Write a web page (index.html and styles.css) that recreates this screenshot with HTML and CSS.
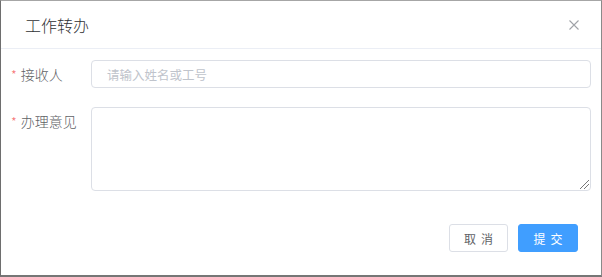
FILE: index.html
```html
<!DOCTYPE html>
<html lang="zh">
<head>
<meta charset="utf-8">
<link rel="stylesheet" href="styles.css">
</head>
<body>
<div class="dialog">
  <div class="dialog-header">
    <span class="dialog-title">工作转办</span>
    <span class="close" aria-label="关闭">
      <svg width="12" height="12" viewBox="0 0 12 12"><path d="M1.5 1.5 L10.5 10.5 M10.5 1.5 L1.5 10.5" stroke="#a0a3a8" stroke-width="1.1" fill="none"/></svg>
    </span>
  </div>
  <div class="dialog-body">
    <div class="form-row">
      <label class="form-label"><span class="req">*</span>接收人</label>
      <div class="form-control"><div class="input"><span class="placeholder">请输入姓名或工号</span></div></div>
    </div>
    <div class="form-row row-textarea">
      <label class="form-label"><span class="req">*</span>办理意见</label>
      <div class="form-control"><div class="textarea"><span class="grip"></span></div></div>
    </div>
  </div>
  <div class="dialog-footer">
    <button class="btn btn-default">取消</button>
    <button class="btn btn-primary">提交</button>
  </div>
</div>
</body>
</html>
```
FILE: styles.css
```css
* { box-sizing: border-box; }
html, body { margin: 0; padding: 0; background: #fff; }
body { font-family: "Noto Sans CJK SC", "Noto Sans", sans-serif; }

.dialog {
  width: 602px;
  height: 277px;
  border-top: 1px solid #a6a6a6;
  border-left: 1px solid #6e6e6e;
  border-right: 1px solid #8a8a8a;
  border-bottom: 2px solid #767676;
  background: #fff;
  display: flex;
  flex-direction: column;
}

.dialog-header {
  height: 48px;
  border-bottom: 1px solid #ebeef5;
  display: flex;
  align-items: center;
  justify-content: space-between;
  padding: 0 21px 0 24px;
  flex-shrink: 0;
}
.dialog-title {
  font-size: 16px;
  font-weight: 300;
  color: #303133;
  line-height: 24px;
}
.close {
  display: flex;
  width: 12px;
  height: 12px;
}

.dialog-body {
  padding: 11px 10px 0 10px;
  display: flex;
  flex-direction: column;
  gap: 18px;
}
.form-row {
  display: flex;
}
.form-label {
  width: 80px;
  flex-shrink: 0;
  font-size: 14px;
  font-weight: 300;
  color: #606266;
  line-height: 28px;
}
.req {
  color: #f56c6c;
  margin-right: 4px;
  font-size: 13px;
}
.form-control { flex: 1; }
.input {
  height: 28px;
  border: 1px solid #dcdfe6;
  border-radius: 4px;
  padding: 0 15px;
  display: flex;
  align-items: center;
}
.placeholder {
  font-size: 12.5px;
  color: #c0c4cc;
}
.textarea {
  height: 84px;
  border: 1px solid #dcdfe6;
  border-radius: 4px;
  position: relative;
}
.grip {
  position: absolute;
  right: 1px;
  bottom: 1px;
  width: 9px;
  height: 9px;
  background: linear-gradient(135deg, transparent 0 45%, #777 45% 52%, transparent 52% 68%, #777 68% 75%, transparent 75%);
}

.dialog-footer {
  display: flex;
  justify-content: flex-end;
  gap: 10px;
  padding: 33px 23px 0 0;
}
.btn {
  height: 28px;
  width: 60px;
  border-radius: 3px;
  font-family: "Noto Sans CJK SC", sans-serif;
  font-size: 12px;
  letter-spacing: 5px;
  padding: 0 0 0 5px;
  border: 1px solid #dcdfe6;
  cursor: pointer;
}
.btn-default {
  background: #fff;
  color: #606266;
  width: 59px;
}
.btn-primary {
  background: #409eff;
  border-color: #409eff;
  color: #fff;
}
```
